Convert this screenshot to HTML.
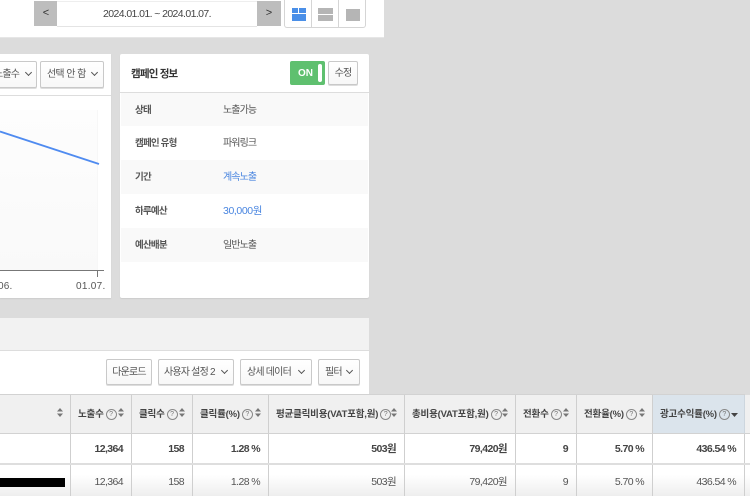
<!DOCTYPE html>
<html lang="ko"><head><meta charset="utf-8"><style>
html,body{margin:0;padding:0;background:#dcdcdc}
body{width:750px;height:496px;overflow:hidden;position:relative;font-family:"Liberation Sans","Noto Sans CJK KR",sans-serif;color:#444;font-size:10px}
#w{left:0;top:0;width:750px;height:496px;overflow:hidden;background:#dcdcdc;filter:blur(.3px)}
div{position:absolute;box-sizing:border-box;white-space:nowrap}
.btn{background:linear-gradient(#fff,#f7f7f7);border:1px solid #c9c9c9;border-radius:2px;box-shadow:0 1px 0 #ddd;line-height:26px;color:#555;text-align:left;font-size:10px;letter-spacing:-.8px}
.chev{display:inline-block;width:4px;height:4px;border-right:1px solid #555;border-bottom:1px solid #555;transform:rotate(45deg) ;position:absolute;top:8px}
.row{left:121px;width:247px;height:34px;line-height:35px}
.lab{position:absolute;left:14px;font-weight:bold;color:#555;font-size:9.500px;letter-spacing:-.8px}
.val{position:absolute;left:102px;color:#555;font-size:10px;letter-spacing:-.9px}
.blue{color:#4a86e0}
.th{top:395px;height:39px;background:#f0f0f0;font-weight:bold;color:#444;line-height:39px;font-size:9.500px;letter-spacing:-.2px;border-right:1px solid #cfcfcf;border-bottom:1px solid #d2d2d2;padding-left:7px}
.td{height:30px;line-height:29px;text-align:right;padding-right:8px;border-right:1px solid #cfcfcf;font-size:10.500px;letter-spacing:-.6px;color:#444}
.r1{top:434px;background:#fff;font-weight:bold}
.r2{top:465px;height:31px;line-height:35px;background:linear-gradient(#fff 30%,#eee);color:#555}
.q{display:inline-block;width:11px;height:11px;border:1px solid #888;border-radius:50%;font-size:7px;line-height:9px;text-align:center;font-weight:normal;margin-left:2px;box-sizing:border-box;letter-spacing:0;vertical-align:1px;color:#777}
.s{position:absolute;width:6px;height:9px;top:13px}
</style></head><body>
<svg width="0" height="0" style="position:absolute"><defs><symbol id="sort" viewBox="0 0 6 9"><path d="M3 0L6 3.500H0ZM3 9L0 5.500H6Z" fill="#777"/></symbol></defs></svg>
<div id="w">

<div style="left:0;top:0;width:384px;height:37px;background:#fff;box-shadow:0 1px 0 #e6e6e6"></div>
<div style="left:34px;top:1px;width:24px;height:25px;background:#bdbdbd;text-align:center;line-height:25px;color:#333;font-size:11px">&lt;</div>
<div style="left:57px;top:1px;width:200px;height:26px;background:#fff;border-top:1px solid #eee;border-bottom:1px solid #e4e4e4;text-align:center;line-height:25px;font-size:10.500px;letter-spacing:-.6px;color:#444">2024.01.01. ~ 2024.01.07.</div>
<div style="left:257px;top:1px;width:24px;height:25px;background:#bdbdbd;text-align:center;line-height:25px;color:#333;font-size:11px">&gt;</div>

<div style="left:284px;top:0;width:82px;height:28px;background:#fff;border:1px solid #d5d5d5;border-top:0;border-radius:0 0 3px 3px"></div>
<div style="left:311px;top:0;width:1px;height:27px;background:#d5d5d5"></div>
<div style="left:338px;top:0;width:1px;height:27px;background:#d5d5d5"></div>
<div style="left:292px;top:8px;width:6px;height:5px;background:#4a8fe8"></div>
<div style="left:299px;top:8px;width:7px;height:5px;background:#4a8fe8"></div>
<div style="left:292px;top:14px;width:14px;height:7px;background:#4a8fe8"></div>
<div style="left:318px;top:8px;width:15px;height:6px;background:#b5b5b5"></div>
<div style="left:318px;top:15px;width:15px;height:6px;background:#b5b5b5"></div>
<div style="left:346px;top:9px;width:14px;height:12px;background:#b5b5b5"></div>

<!-- left card -->
<div style="left:0;top:54px;width:111px;height:244px;background:#fff;box-shadow:0 1px 1px #ccc"></div>
<div style="left:0;top:95px;width:111px;height:1px;background:#ddd"></div>
<div style="left:0;top:110px;width:98px;height:160px;background:linear-gradient(#fdfdfd,#f9f9f9);border-right:1px solid #f7f7f7"></div>
<div class="btn" style="left:-19px;top:61px;width:56px;height:27px;padding-left:12px">노출수<span class="chev" style="left:44px"></span></div>
<div class="btn" style="left:40px;top:61px;width:64px;height:27px;padding-left:6px;word-spacing:.5px">선택 안 함<span class="chev" style="left:51px"></span></div>
<svg style="position:absolute;left:0;top:125px" width="105" height="45"><path d="M0 6.500L99 39" stroke="#4f8bf0" stroke-width="1.800" fill="none"/></svg>
<div style="left:0;top:270px;width:104px;height:1px;background:#777"></div>
<div style="left:97px;top:270px;width:1px;height:7px;background:#777"></div>
<div style="left:-2px;top:281px;font-size:10px;letter-spacing:.2px;color:#555">06.</div>
<div style="left:76px;top:281px;font-size:10px;letter-spacing:.3px;color:#555">01.07.</div>

<!-- right card -->
<div style="left:120px;top:54px;width:249px;height:244px;background:#fff;box-shadow:0 1px 1px #ccc;border-radius:2px"></div>
<div style="left:120px;top:92px;width:249px;height:1px;background:#ddd"></div>
<div style="left:131px;top:66px;font-weight:bold;font-size:10.500px;color:#333;letter-spacing:-.8px">캠페인 정보</div>
<div style="left:290px;top:61px;width:35px;height:24px;background:#5fc06f;border-radius:2px;color:#fff;font-weight:bold;line-height:25px;padding-left:8px;font-size:10px">ON</div>
<div style="left:318px;top:64px;width:4px;height:18px;background:#fff;border-radius:2px"></div>
<div class="btn" style="left:328px;top:61px;width:30px;height:24px;text-align:center;line-height:23px">수정</div>

<div class="row" style="top:93px;height:33px;background:#f9f9f9"><span class="lab">상태</span><span class="val">노출가능</span></div>
<div class="row" style="top:126px;background:#fff"><span class="lab">캠페인 유형</span><span class="val">파워링크</span></div>
<div class="row" style="top:160px;background:#f9f9f9"><span class="lab">기간</span><span class="val blue">계속노출</span></div>
<div class="row" style="top:194px;background:#fff"><span class="lab">하루예산</span><span class="val blue" style="font-size:10.500px;letter-spacing:-.4px">30,000원</span></div>
<div class="row" style="top:228px;background:#f9f9f9"><span class="lab">예산배분</span><span class="val">일반노출</span></div>

<!-- bottom card -->
<div style="left:0;top:318px;width:369px;height:33px;background:#f2f2f2;border-bottom:1px solid #ddd"></div>
<div style="left:0;top:351px;width:369px;height:44px;background:#fff"></div>
<div class="btn" style="left:106px;top:359px;width:46px;height:26px;text-align:center">다운로드</div>
<div class="btn" style="left:158px;top:359px;width:76px;height:26px;padding-left:5px">사용자 설정 2<span class="chev" style="left:63px"></span></div>
<div class="btn" style="left:240px;top:359px;width:72px;height:26px;padding-left:6px">상세 데이터<span class="chev" style="left:58px"></span></div>
<div class="btn" style="left:318px;top:359px;width:42px;height:26px;padding-left:6px">필터<span class="chev" style="left:28px"></span></div>

<!-- table -->
<div style="left:0;top:394px;width:745px;height:1px;background:#d2d2d2"></div>
<div class="th" style="left:0;width:71px"><svg class="s" style="left:57px"><use href="#sort"/></svg></div>
<div class="th" style="left:71px;width:61px">노출수<span class="q">?</span><svg class="s" style="left:47px"><use href="#sort"/></svg></div>
<div class="th" style="left:132px;width:61px">클릭수<span class="q">?</span><svg class="s" style="left:47px"><use href="#sort"/></svg></div>
<div class="th" style="left:193px;width:76px">클릭률(%)<span class="q">?</span><svg class="s" style="left:62px"><use href="#sort"/></svg></div>
<div class="th" style="left:269px;width:136px">평균클릭비용(VAT포함,원)<span class="q">?</span><svg class="s" style="left:122px"><use href="#sort"/></svg></div>
<div class="th" style="left:405px;width:111px">총비용(VAT포함,원)<span class="q">?</span><svg class="s" style="left:97px"><use href="#sort"/></svg></div>
<div class="th" style="left:516px;width:61px">전환수<span class="q">?</span><svg class="s" style="left:47px"><use href="#sort"/></svg></div>
<div class="th" style="left:577px;width:76px">전환율(%)<span class="q">?</span><svg class="s" style="left:62px"><use href="#sort"/></svg></div>
<div class="th" style="left:653px;width:92px;background:#dbe4ec;border-right:1px solid #cdd6de">광고수익률(%)<span class="q">?</span><svg style="position:absolute;left:78px;top:18px" width="7" height="4"><path d="M0 0H7L3.500 4Z" fill="#444"/></svg></div>
<div style="left:745px;top:395px;width:5px;height:39px;background:#f0f0f0;border-bottom:1px solid #d2d2d2"></div>

<div class="td r1" style="left:0;width:71px"></div>
<div class="td r1" style="left:71px;width:61px;line-height:30px">12,364</div>
<div class="td r1" style="left:132px;width:61px;line-height:30px">158</div>
<div class="td r1" style="left:193px;width:76px;line-height:30px">1.28 %</div>
<div class="td r1" style="left:269px;width:136px;line-height:30px">503원</div>
<div class="td r1" style="left:405px;width:111px;line-height:30px">79,420원</div>
<div class="td r1" style="left:516px;width:61px;line-height:30px">9</div>
<div class="td r1" style="left:577px;width:76px;line-height:30px">5.70 %</div>
<div class="td r1" style="left:653px;width:92px;line-height:30px">436.54 %</div>
<div class="td r1" style="left:745px;width:5px;border:0;padding:0"></div>

<div style="left:0;top:463px;width:750px;height:2px;background:#dedede"></div>

<div class="td r2" style="left:0;width:71px"></div>
<div class="td r2" style="left:71px;width:61px">12,364</div>
<div class="td r2" style="left:132px;width:61px">158</div>
<div class="td r2" style="left:193px;width:76px">1.28 %</div>
<div class="td r2" style="left:269px;width:136px">503원</div>
<div class="td r2" style="left:405px;width:111px">79,420원</div>
<div class="td r2" style="left:516px;width:61px">9</div>
<div class="td r2" style="left:577px;width:76px">5.70 %</div>
<div class="td r2" style="left:653px;width:92px">436.54 %</div>
<div class="td r2" style="left:745px;width:5px;border:0;padding:0"></div>
<div style="left:0;top:478px;width:65px;height:9px;background:#000"></div>
</div>
</body></html>
